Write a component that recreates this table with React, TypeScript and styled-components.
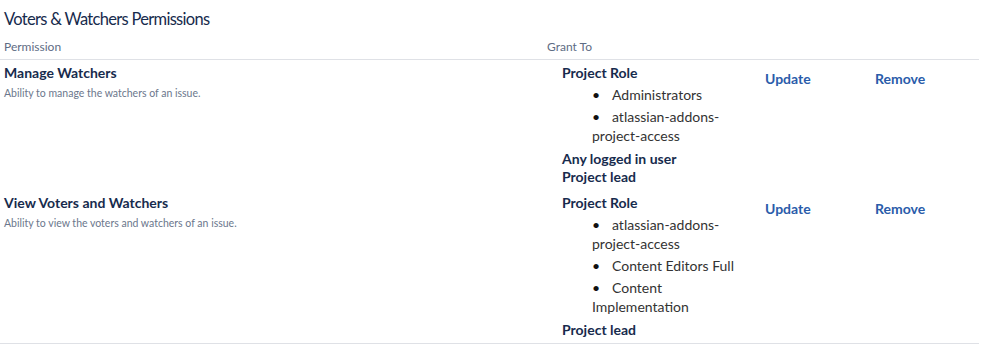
import React from "react";
import styled, { createGlobalStyle } from "styled-components";

const Global = createGlobalStyle`
  html, body { margin: 0; padding: 0; background: #fff; }
  body { font-family: Lato, "Open Sans", sans-serif; color: #172b4d; }
`;

const Page = styled.div`
  width: 999px;
`;

const Title = styled.h2`
  margin: 0;
  padding: 9px 0 0 4px;
  font-size: 16.5px;
  font-weight: 400;
  line-height: 20px;
  letter-spacing: -0.7px;
  color: #172b4d;
`;

const Grid = styled.div`
  display: grid;
  grid-template-columns: 547px 218px 110px 104px;
  width: 979px;
`;

const HeadCell = styled.div<{ $pad?: number }>`
  font-size: 12px;
  color: #5e6c84;
  padding: 10px 0 4px ${(p) => p.$pad ?? 0}px;
  line-height: 16px;
  border-bottom: 1px solid #dfe1e6;
`;

const Cell = styled.div<{ $last?: boolean }>`
  padding: 4px 0 4px 0;
  border-bottom: ${(p) => (p.$last ? "1px solid #dfe1e6" : "none")};
`;

const PermName = styled.div`
  font-size: 14px;
  font-weight: 700;
  line-height: 18px;
  padding-left: 4px;
  color: #172b4d;
`;

const PermDesc = styled.div`
  font-size: 10.5px;
  line-height: 14px;
  margin-top: 4px;
  padding-left: 4px;
  color: #6b778c;
`;

const GrantBox = styled.div`
  padding-left: 15px;
  width: 180px;
`;

const Strong = styled.div`
  font-size: 14px;
  font-weight: 700;
  line-height: 18px;
  color: #172b4d;
`;

const List = styled.ul`
  list-style: none;
  margin: 3px 0 5px 0;
  padding: 0 0 0 30px;
`;

const Item = styled.li`
  font-size: 14px;
  line-height: 19px;
  color: #333333;
  & + & {
    margin-top: 3px;
  }
  &::before {
    content: "•";
    display: inline-block;
    width: 20px;
    color: #111111;
  }
`;

const Action = styled.a`
  display: inline-block;
  font-size: 14px;
  font-weight: 700;
  color: #2a5caa;
  text-decoration: none;
  margin-top: 6px;
  line-height: 18px;
`;

type Row = {
  name: string;
  desc: string;
  groups: { title: string; items?: string[] }[];
};

const rows: Row[] = [
  {
    name: "Manage Watchers",
    desc: "Ability to manage the watchers of an issue.",
    groups: [
      { title: "Project Role", items: ["Administrators", "atlassian-addons-project-access"] },
      { title: "Any logged in user" },
      { title: "Project lead" },
    ],
  },
  {
    name: "View Voters and Watchers",
    desc: "Ability to view the voters and watchers of an issue.",
    groups: [
      {
        title: "Project Role",
        items: ["atlassian-addons-project-access", "Content Editors Full", "Content Implementation"],
      },
      { title: "Project lead" },
    ],
  },
];

export default function App() {
  return (
    <Page>
      <Global />
      <Title>Voters &amp; Watchers Permissions</Title>
      <Grid>
        <HeadCell $pad={4}>Permission</HeadCell>
        <HeadCell>Grant To</HeadCell>
        <HeadCell />
        <HeadCell />
        {rows.map((r, i) => {
          const last = i === rows.length - 1;
          return (
            <React.Fragment key={r.name}>
              <Cell $last={last}>
                <PermName>{r.name}</PermName>
                <PermDesc>{r.desc}</PermDesc>
              </Cell>
              <Cell $last={last}>
                <GrantBox>
                  {r.groups.map((g) => (
                    <React.Fragment key={g.title}>
                      <Strong>{g.title}</Strong>
                      {g.items && (
                        <List>
                          {g.items.map((it) => (
                            <Item key={it}>{it}</Item>
                          ))}
                        </List>
                      )}
                    </React.Fragment>
                  ))}
                </GrantBox>
              </Cell>
              <Cell $last={last}>
                <Action href="#">Update</Action>
              </Cell>
              <Cell $last={last}>
                <Action href="#">Remove</Action>
              </Cell>
            </React.Fragment>
          );
        })}
      </Grid>
    </Page>
  );
}
